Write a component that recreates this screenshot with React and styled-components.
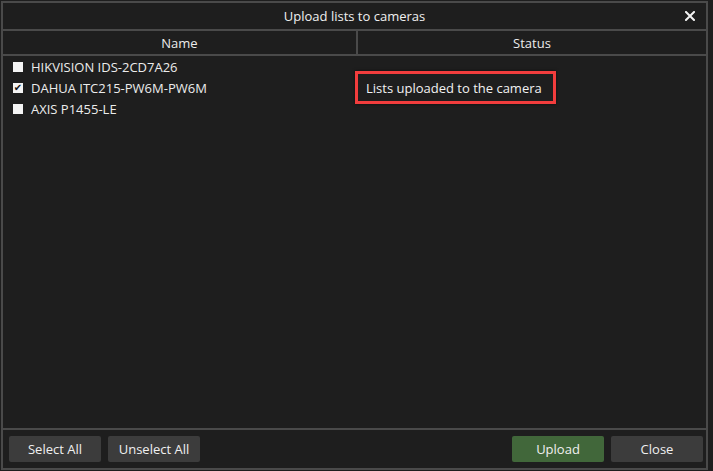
import styled, { createGlobalStyle } from "styled-components";

const CAMERAS = [
  { name: "HIKVISION IDS-2CD7A26", checked: false, status: "" },
  { name: "DAHUA ITC215-PW6M-PW6M", checked: true, status: "Lists uploaded to the camera" },
  { name: "AXIS P1455-LE", checked: false, status: "" },
];

const GlobalStyle = createGlobalStyle`
  html, body {
    margin: 0;
    padding: 0;
    background: #1e1e1e;
  }
  body {
    font-family: "Open Sans", "Noto Sans", sans-serif;
    font-size: 13px;
    color: #ececec;
  }
`;

function App() {
  return (
    <>
      <GlobalStyle />
      <Window>
        <TitleBar>
          <span />
          <Title>Upload lists to cameras</Title>
          <CloseX aria-label="close">
            <svg width="10" height="10" viewBox="0 0 10 10">
              <path d="M1 1 L9 9 M9 1 L1 9" stroke="#f2f2f2" strokeWidth="2" strokeLinecap="square" />
            </svg>
          </CloseX>
        </TitleBar>
        <HeaderRow>
          <HeaderCell divider>Name</HeaderCell>
          <HeaderCell>Status</HeaderCell>
        </HeaderRow>
        <Body>
          {CAMERAS.map((cam) => (
            <Row key={cam.name}>
              <NameCell>
                <Check>{cam.checked ? "✔" : ""}</Check>
                {cam.name}
              </NameCell>
              <StatusCell>
                {cam.status && <StatusBadge>{cam.status}</StatusBadge>}
              </StatusCell>
            </Row>
          ))}
        </Body>
        <Footer>
          <Button>Select All</Button>
          <Button>Unselect All</Button>
          <Spacer />
          <Button primary>Upload</Button>
          <Button>Close</Button>
        </Footer>
      </Window>
    </>
  );
}

const Window = styled.div`
  box-sizing: border-box;
  margin: 1px 0 0 1px;
  width: 707px;
  height: 469px;
  border: 2px solid #4a4a4a;
  background: #1e1e1e;
  display: flex;
  flex-direction: column;
`;

const TitleBar = styled.div`
  height: 26px;
  border-bottom: 2px solid #4a4a4a;
  display: grid;
  grid-template-columns: 26px 1fr 26px;
  align-items: center;
`;

const Title = styled.div`
  text-align: center;
  color: #f0f0f0;
`;

const CloseX = styled.div`
  display: flex;
  align-items: center;
  justify-content: center;
  padding-right: 6px;
`;

const HeaderRow = styled.div`
  height: 23px;
  border-bottom: 2px solid #4a4a4a;
  display: grid;
  grid-template-columns: 355px 1fr;
`;

const HeaderCell = styled.div`
  display: flex;
  align-items: center;
  justify-content: center;
  border-right: ${({ divider }) => (divider ? "2px solid #4a4a4a" : "none")};
  color: #ececec;
`;

const Body = styled.div`
  flex: 1;
`;

const Row = styled.div`
  height: 21px;
  display: grid;
  grid-template-columns: 352px 1fr;
  align-items: center;
`;

const NameCell = styled.div`
  display: flex;
  align-items: center;
  gap: 8px;
  padding-left: 10px;
  white-space: nowrap;
`;

const Check = styled.span`
  width: 10px;
  height: 10px;
  background: #f4f4f4;
  color: #111;
  font-size: 10px;
  line-height: 10px;
  font-family: "DejaVu Sans", sans-serif;
  display: flex;
  align-items: center;
  justify-content: center;
`;

const StatusCell = styled.div`
  display: flex;
  align-items: center;
  height: 21px;
`;

const StatusBadge = styled.div`
  box-sizing: border-box;
  height: 33px;
  width: 201px;
  border: 3px solid #f23d3d;
  box-shadow: 0 0 3px rgba(0, 0, 0, 0.6);
  padding-left: 8px;
  display: flex;
  align-items: center;
  white-space: nowrap;
  color: #f2f2f2;
`;

const Footer = styled.div`
  border-top: 2px solid #4a4a4a;
  height: 40px;
  box-sizing: border-box;
  padding: 6px 3px 0 6px;
  display: flex;
  gap: 7px;
`;

const Spacer = styled.div`
  flex: 1;
`;

const Button = styled.button`
  width: 92px;
  height: 26px;
  border: none;
  border-radius: 2px;
  background: ${({ primary }) => (primary ? "#41673a" : "#3c3c3c")};
  color: #f0f0f0;
  font-family: "Open Sans", "Noto Sans", sans-serif;
  font-size: 13px;
  padding: 0;
  cursor: pointer;
`;

export default App;
